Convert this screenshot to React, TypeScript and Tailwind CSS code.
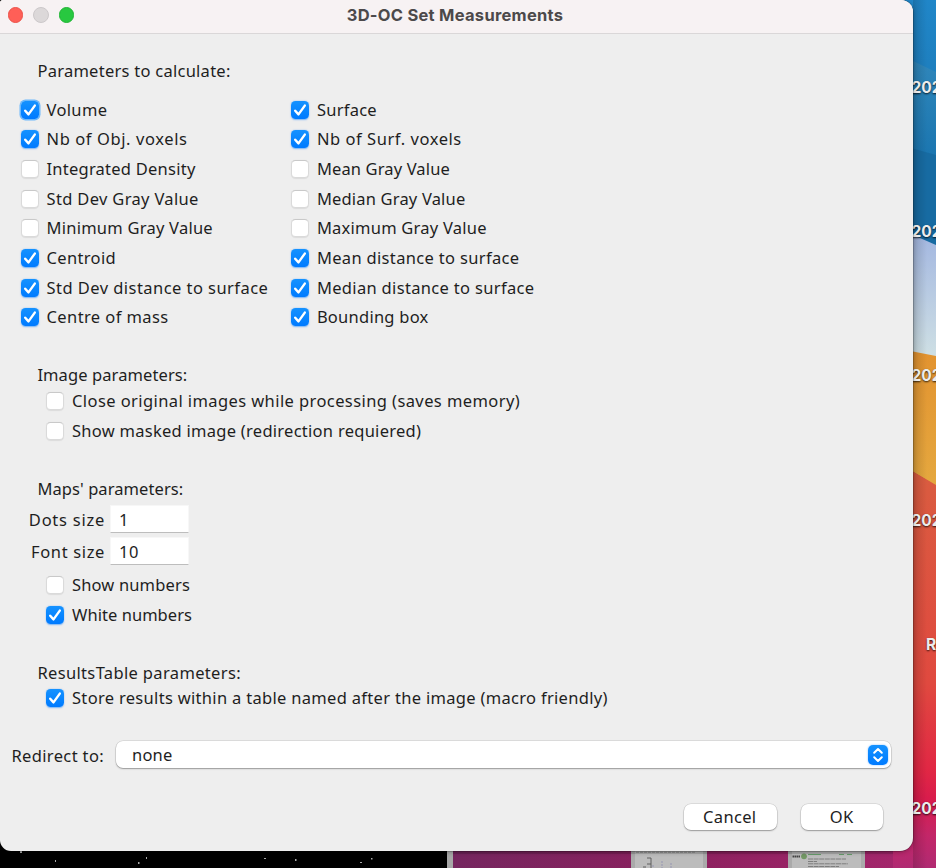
import React from "react";

const FONT = "font-['Noto_Sans','Open_Sans',sans-serif]";

function Box({ on, focus }: { on?: boolean; focus?: boolean }) {
  if (!on) {
    return (
      <span className="h-[18px] w-[18px] shrink-0 rounded-[4.5px] border border-[#dadada] border-t-[#c9c9c9] bg-white shadow-[0_0.5px_1px_rgba(0,0,0,0.08)]" />
    );
  }
  return (
    <span
      className={
        "flex h-[18px] w-[18px] shrink-0 items-center justify-center rounded-[4.5px] bg-linear-to-b from-[#1592ff] to-[#007aff] " +
        (focus ? "shadow-[0_0_0_1.5px_#6db8fb]" : "shadow-[0_0.5px_1.5px_rgba(0,122,255,0.5)]")
      }
    >
      <svg width="18" height="18" viewBox="0 0 18 18" fill="none" stroke="#fff" strokeWidth="2.4" strokeLinecap="round" strokeLinejoin="round">
        <path d="M4.2 9.7 L7.5 13.4 L13.8 4.6" />
      </svg>
    </span>
  );
}

function Check({ label, on, focus, track = "" }: { label: string; on?: boolean; focus?: boolean; track?: string }) {
  return (
    <div className="flex h-[29.65px] items-center gap-[8px] whitespace-nowrap">
      <Box on={on} focus={focus} />
      <span className={track}>{label}</span>
    </div>
  );
}

function Heading({ children, track = "" }: { children: string; track?: string }) {
  return <div className={"flex h-6 items-center pl-[37.4px] " + track}>{children}</div>;
}

function Field({ label, value, track }: { label: string; value: string; track: string }) {
  return (
    <div className="flex h-8 items-center">
      <div className={"w-[105px] pt-[1px] text-right whitespace-nowrap " + track}>{label}</div>
      <div className="ml-[5px] flex h-[28px] w-[79px] items-center border border-[#f7f7f7] border-b-[#bdbdbd] bg-white pt-[1px] pl-[8px] tracking-[0.6px]">{value}</div>
    </div>
  );
}

function Desktop() {
  return (
    <svg className="absolute inset-0" width="936" height="868" viewBox="0 0 936 868">
      <defs>
        <linearGradient id="blue" x1="0" y1="0" x2="0" y2="1">
          <stop offset="0" stopColor="#2086c8" />
          <stop offset="1" stopColor="#186da5" />
        </linearGradient>
        <linearGradient id="teal" x1="0" y1="0" x2="0" y2="1">
          <stop offset="0" stopColor="#3288bb" />
          <stop offset="1" stopColor="#1b76b0" />
        </linearGradient>
        <linearGradient id="pale" x1="0" y1="0" x2="0" y2="1">
          <stop offset="0" stopColor="#a0b4e0" />
          <stop offset="1" stopColor="#cfe0e4" />
        </linearGradient>
        <linearGradient id="gold" x1="0" y1="0" x2="0" y2="1">
          <stop offset="0" stopColor="#e2922f" />
          <stop offset="1" stopColor="#e5a83f" />
        </linearGradient>
        <linearGradient id="red" x1="0" y1="0" x2="0" y2="1">
          <stop offset="0" stopColor="#d95d40" />
          <stop offset="0.55" stopColor="#e0493f" />
          <stop offset="0.76" stopColor="#e12744" />
          <stop offset="0.83" stopColor="#d91c4c" />
          <stop offset="0.92" stopColor="#c32668" />
          <stop offset="1" stopColor="#b02a72" />
        </linearGradient>
        <linearGradient id="plum" x1="0" y1="0" x2="1" y2="0">
          <stop offset="0" stopColor="#75265f" />
          <stop offset="0.5" stopColor="#8b205e" />
          <stop offset="1" stopColor="#a3266b" />
        </linearGradient>
        <linearGradient id="edge" x1="0" y1="0" x2="1" y2="0">
          <stop offset="0" stopColor="#000" stopOpacity="0.15" />
          <stop offset="1" stopColor="#000" stopOpacity="0" />
        </linearGradient>
      </defs>
      <rect x="890" y="0" width="46" height="260" fill="url(#blue)" />
      <path d="M890 50L936 72V155L890 142Z" fill="url(#teal)" />
      <path d="M890 142L936 155V246L890 225Z" fill="#176ba2" />
      <path d="M890 225L936 245V358L890 347Z" fill="url(#pale)" />
      <path d="M890 347L936 356V486L890 458Z" fill="url(#gold)" />
      <path d="M890 458L936 485V868H890Z" fill="url(#red)" />
      <rect x="453" y="840" width="440" height="28" fill="url(#plum)" />
      <rect x="913" y="0" width="14" height="868" fill="url(#edge)" />
      <rect x="0" y="840" width="447" height="28" fill="#000" />
      <rect x="447" y="840" width="6" height="28" fill="#a7a7a7" />
      <g fill="#aaa">
        <rect x="20" y="851" width="2" height="2" />
        <rect x="55" y="860" width="1" height="2" />
        <rect x="138" y="862" width="1.5" height="2" />
        <rect x="146" y="857" width="1" height="2" />
        <rect x="264" y="858" width="2" height="1" />
        <rect x="295" y="859" width="1.5" height="2" />
        <rect x="360" y="862" width="2" height="1" />
        <rect x="371" y="858" width="1.5" height="1.5" />
      </g>
      <rect x="631" y="840" width="76" height="28" fill="#aaa" />
      <rect x="635" y="840" width="68" height="28" fill="#bcbcbc" />
      <path d="M636 852.3H696" stroke="#777" strokeWidth="0.6" strokeDasharray="3 1" />
      <path d="M647 858H651V868M647 864H651M643 867H646" fill="none" stroke="#555" strokeWidth="0.9" />
      <path d="M653 865V868M662 861V868M671 863V868" stroke="#8888b0" strokeWidth="0.7" strokeDasharray="2 1" />
      <rect x="788" y="840" width="77" height="28" fill="#aaa" />
      <rect x="792" y="840" width="69" height="28" fill="#bcbcbc" />
      <path d="M792.5 856.5H800" stroke="#444" strokeWidth="1.8" strokeDasharray="1.6 0.4" />
      <circle cx="804" cy="856.3" r="2.9" fill="#729764" />
      <path d="M808 854.5H821M839 854.5H844M847 854.5H852" stroke="#5c9862" strokeWidth="0.9" />
      <path d="M808 859H846M808 861.5H817M808 863.8H848M808 866.5H839" stroke="#777" strokeWidth="0.9" strokeDasharray="5 0.6" />
      <rect x="453" y="851" width="440" height="3" fill="#000" opacity="0.12" />
      <g fill="#ececec" className="font-['Inter',sans-serif] text-[15.5px] font-bold [text-shadow:0_1px_2px_rgba(0,0,0,0.8)]">
        {[93, 237, 381, 526, 814].map((y) => (
          <text key={y} x="911.5" y={y}>202</text>
        ))}
        <text x="926" y="650">R</text>
      </g>
    </svg>
  );
}

export default function App() {
  return (
    <div className="relative h-[868px] w-[936px] overflow-hidden bg-black">
      <Desktop />
      <div className={"relative flex h-[851px] w-[913px] flex-col overflow-hidden rounded-tl-[3px] rounded-tr-[12px] rounded-br-[13px] rounded-bl-[11px] bg-[#eeeeee] text-[16.5px] leading-6 tracking-[0.35px] text-[#1e1e1e] shadow-[0_0_0_0.5px_rgba(0,0,0,0.35),0_1px_5px_rgba(0,0,0,0.3)] " + FONT}>
        <div className="grid h-[34px] shrink-0 grid-cols-[1fr_auto_1fr] items-center border-b border-[#dad7d8] bg-[#f7f2f3] pb-[3px]">
          <div className="flex gap-[10px] pl-[7.5px]">
            <span className="h-[15.5px] w-[15.5px] rounded-full border border-[#ec5148] bg-[#ff5f57]" />
            <span className="h-[15.5px] w-[15.5px] rounded-full border border-[#ccc8ca] bg-[#dcd8d9]" />
            <span className="h-[15.5px] w-[15.5px] rounded-full border border-[#1fb534] bg-[#28c840]" />
          </div>
          <div className="pr-[3px] font-['Inter',sans-serif] text-[16.5px] font-bold tracking-[0.27px] text-[#4c494a]">3D-OC Set Measurements</div>
          <div />
        </div>

        <div className="pt-[25px]">
          <Heading track="tracking-[0.26px]">Parameters to calculate:</Heading>
        </div>
        <div className="mt-[12px] grid shrink-0 grid-cols-[270.4px_1fr] pl-[20.5px]">
          <Check label="Volume" on focus />
          <Check label="Surface" on track="tracking-[0.25px]" />
          <Check label="Nb of Obj. voxels" on track="tracking-[0.6px]" />
          <Check label="Nb of Surf. voxels" on track="tracking-[0.55px]" />
          <Check label="Integrated Density" track="tracking-[0.24px]" />
          <Check label="Mean Gray Value" track="tracking-[0.13px]" />
          <Check label="Std Dev Gray Value" track="tracking-[0.33px]" />
          <Check label="Median Gray Value" track="tracking-[0.18px]" />
          <Check label="Minimum Gray Value" track="tracking-[0.24px]" />
          <Check label="Maximum Gray Value" track="tracking-[0.24px]" />
          <Check label="Centroid" on />
          <Check label="Mean distance to surface" on track="tracking-[0.33px]" />
          <Check label="Std Dev distance to surface" on track="tracking-[0.45px]" />
          <Check label="Median distance to surface" on track="tracking-[0.33px]" />
          <Check label="Centre of mass" on track="tracking-[0.4px]" />
          <Check label="Bounding box" on track="tracking-[0.25px]" />
        </div>

        <div className="pt-[31px]">
          <Heading track="tracking-[0.1px]">Image parameters:</Heading>
          <div className="-mt-[0.8px] pl-[46px]">
            <Check label="Close original images while processing (saves memory)" track="tracking-[0.41px]" />
            <Check label="Show masked image (redirection requiered)" track="tracking-[0.27px]" />
          </div>
        </div>

        <div className="pt-[31.3px]">
          <Heading track="tracking-[0.08px]">Maps' parameters:</Heading>
          <div className="pt-[2.5px]">
            <Field label="Dots size" value="1" track="tracking-[0.75px]" />
            <Field label="Font size" value="10" track="tracking-[0.65px]" />
          </div>
          <div className="pt-[3px] pl-[46px]">
            <Check label="Show numbers" track="tracking-[0.15px]" />
            <Check label="White numbers" on track="tracking-[0.05px]" />
          </div>
        </div>

        <div className="pt-[31px]">
          <Heading>ResultsTable parameters:</Heading>
          <div className="-mt-[1.5px] pl-[46px]">
            <Check label="Store results within a table named after the image (macro friendly)" on track="tracking-[0.31px]" />
          </div>
        </div>

        <div className="mt-[28.5px] flex h-[27px] shrink-0 items-center">
          <div className="w-[104px] pt-[2px] text-right">Redirect to:</div>
          <div className="ml-[12px] flex h-[27px] w-[774.5px] items-center justify-between rounded-[7px] bg-white pr-[2.5px] pl-[16px] shadow-[0_0_0_0.5px_rgba(0,0,0,0.15),0_1px_1.5px_rgba(0,0,0,0.3)]">
            <span className="tracking-[0.2px]">none</span>
            <span className="flex h-[20.5px] w-[20.5px] items-center justify-center rounded-[5px] bg-linear-to-b from-[#1592ff] to-[#007aff] shadow-[0_0_2px_rgba(0,122,255,0.5)]">
              <svg width="20" height="20" viewBox="0 0 20 20" fill="none" stroke="#fff" strokeWidth="2" strokeLinecap="round" strokeLinejoin="round">
                <path d="M6.2 7.7L10 4L13.8 7.7M6.2 12.3L10 16L13.8 12.3" />
              </svg>
            </span>
          </div>
        </div>

        <div className="mt-[35.5px] flex shrink-0 justify-end gap-[24px] pr-[30px]">
          <button className="h-[26px] w-[92.5px] rounded-[7px] bg-white pr-[1px] shadow-[0_0_0_0.5px_rgba(0,0,0,0.15),0_1px_1.5px_rgba(0,0,0,0.3)]">Cancel</button>
          <button className="h-[26px] w-[82.5px] rounded-[7px] bg-white shadow-[0_0_0_0.5px_rgba(0,0,0,0.15),0_1px_1.5px_rgba(0,0,0,0.3)]">OK</button>
        </div>
      </div>
    </div>
  );
}
